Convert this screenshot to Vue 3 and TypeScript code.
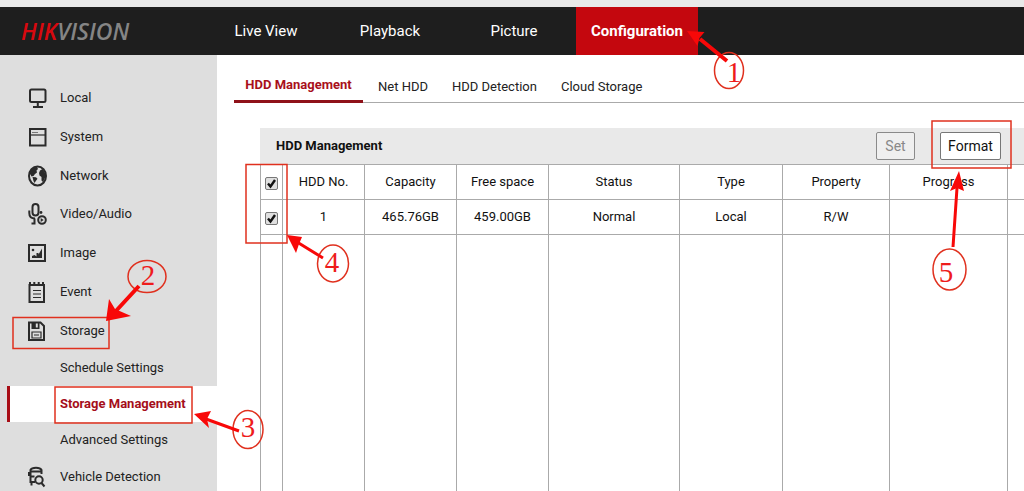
<script setup lang="ts">
import { ref } from 'vue'

interface MenuItem { icon: string; label: string }

const topNav = ['Live View', 'Playback', 'Picture', 'Configuration']
const menu: MenuItem[] = [
  { icon: 'local', label: 'Local' },
  { icon: 'system', label: 'System' },
  { icon: 'network', label: 'Network' },
  { icon: 'av', label: 'Video/Audio' },
  { icon: 'image', label: 'Image' },
  { icon: 'event', label: 'Event' },
  { icon: 'storage', label: 'Storage' },
]
const subMenu = ['Schedule Settings', 'Storage Management', 'Advanced Settings']
const tabs = ['HDD Management', 'Net HDD', 'HDD Detection', 'Cloud Storage']
const columns = ['HDD No.', 'Capacity', 'Free space', 'Status', 'Type', 'Property', 'Progress', '']
const disk = ['1', '465.76GB', '459.00GB', 'Normal', 'Local', 'R/W', '', '']
const allChecked = ref(true)
const diskChecked = ref(true)
</script>

<template>
  <div class="page">
    <div class="strip"></div>
    <header class="header">
      <a class="logo" href="#" aria-label="HIKVISION"><span class="hik">HIK</span><span>VISION</span></a>
      <nav class="top-nav">
        <a v-for="(n, i) in topNav" :key="n" href="#" :class="['top-link', 'top-' + i]">{{ n }}</a>
      </nav>
    </header>
    <div class="body">
      <aside class="sidebar">
        <nav>
          <div class="menu">
            <a v-for="m in menu" :key="m.icon" href="#" class="item">
              <svg class="icon" viewBox="0 0 20 22" aria-hidden="true">
                <g v-if="m.icon === 'local'" class="s">
                  <rect x="3" y="2.500" width="15.500" height="12.500" rx="1.500" />
                  <path d="M10.800 15v4.500M6 20h10" />
                </g>
                <g v-else-if="m.icon === 'system'">
                  <rect class="s" x="3" y="3" width="15.500" height="16.500" />
                  <path class="s thin" d="M3 9h15.500" />
                  <path class="t" d="M5 6.500h6" />
                </g>
                <g v-else-if="m.icon === 'network'">
                  <ellipse class="s" cx="10.500" cy="11" rx="8.500" ry="9.500" />
                  <path class="f" d="M2.500 8C3.500 4.500 6.500 2 10 2l1 2-1.500 1.500.5 2-2 1.500-1.500 2-2 .5zM5.500 12l3.500.3 1.500 1.500-1.500 2-1.500 2.200-1-2z" />
                  <path class="f" d="M13 5.500l2.500-1.500 2.500 4 .5 4-2.500 5-1.500-1.500V12l-2-1.500-.5-2.500z" />
                </g>
                <g v-else-if="m.icon === 'av'">
                  <rect class="s" x="5.500" y="1" width="6" height="11.500" rx="3" />
                  <path class="s" d="M2.300 7.500v2.500c0 3.500 2 5.500 5.700 5.500M7.500 15.500V20M4.500 20.500h4" />
                  <circle class="s" cx="15" cy="17" r="3.800" />
                  <path class="f" d="M13.700 15v4l3-2z" />
                  <circle class="f" cx="14" cy="9.500" r="1.400" />
                </g>
                <g v-else-if="m.icon === 'image'">
                  <rect class="s" x="2" y="3" width="16" height="16" />
                  <path class="f" d="M5 16v-2l2.500-1 2 1.500V11h2v1.500L15 6.500V16z" />
                  <circle class="f" cx="6" cy="8" r="1.300" />
                </g>
                <g v-else-if="m.icon === 'event'">
                  <rect class="s" x="2.500" y="4" width="14.500" height="17" />
                  <path class="s" d="M3 1v4M7.300 1v4M11.700 1v4M16 1v4" />
                  <path class="s thin" d="M6 9.500h8M6 13h8M6 16.500h8" />
                </g>
                <g v-else>
                  <path class="s" d="M2 2.500h11.500L17 6v14H2z" />
                  <path class="f" d="M4.500 3h8v6h-8z" />
                  <path class="l" d="M9.800 3.500v4" />
                  <path class="s thin" d="M5 12h9v6H5zM7 15h5" />
                </g>
              </svg>
              <span>{{ m.label }}</span>
            </a>
          </div>
          <a v-for="(s, i) in subMenu" :key="s" href="#" :class="['sub', { current: i === 1 }]">{{ s }}</a>
          <a href="#" class="item">
            <svg class="icon" viewBox="0 0 20 22" aria-hidden="true">
              <path class="s" d="M3.500 4C5 1 13 1 14.500 4v4M3.500 3.500V16h4.500M3.500 5.500h11M3.500 10.500h4M2 6v4M4.500 16v3.500" />
              <circle class="s" cx="12" cy="14" r="3.700" />
              <path class="s" d="M14.500 17l3 3.500" />
            </svg>
            <span>Vehicle Detection</span>
          </a>
        </nav>
      </aside>
      <main class="main">
        <nav class="tabs">
          <a v-for="(t, i) in tabs" :key="t" href="#" :class="['tab', { active: i === 0 }]">{{ t }}</a>
        </nav>
        <section class="panel">
          <div class="panel-head">
            <h2>HDD Management</h2>
            <button type="button" class="btn" disabled>Set</button>
            <button type="button" class="btn format">Format</button>
          </div>
          <div class="table-area">
            <table>
              <colgroup>
                <col class="c0"><col class="c1"><col class="c2"><col class="c2"><col class="c4"><col class="c5"><col class="c6"><col class="c7"><col>
              </colgroup>
              <thead>
                <tr>
                  <th>
                    <label class="check">
                      <input v-model="allChecked" type="checkbox" aria-label="Select all disks">
                      <svg v-if="allChecked" viewBox="0 0 13 13" aria-hidden="true"><path d="M3 6.500l2.500 3L10 3" /></svg>
                    </label>
                  </th>
                  <th v-for="(c, i) in columns" :key="i">{{ c }}</th>
                </tr>
              </thead>
              <tbody>
                <tr>
                  <td>
                    <label class="check">
                      <input v-model="diskChecked" type="checkbox" aria-label="Select disk 1">
                      <svg v-if="diskChecked" viewBox="0 0 13 13" aria-hidden="true"><path d="M3 6.500l2.500 3L10 3" /></svg>
                    </label>
                  </td>
                  <td v-for="(d, i) in disk" :key="i">{{ d }}</td>
                </tr>
                <tr class="rest"><td v-for="i in 9" :key="i"></td></tr>
              </tbody>
            </table>
          </div>
        </section>
      </main>
    </div>
    <svg class="notes" width="1024" height="491" viewBox="0 0 1024 491" aria-hidden="true">
      <g class="outline">
        <rect x="13" y="317.500" width="96" height="31" />
        <rect x="55" y="387" width="137" height="36" />
        <rect x="246" y="164.500" width="41" height="78.500" />
        <rect x="932" y="121" width="79" height="47" />
        <ellipse cx="729" cy="70.500" rx="14.500" ry="18" />
        <ellipse cx="147" cy="276.500" rx="19" ry="16" />
        <ellipse cx="248" cy="429.500" rx="15" ry="19" />
        <ellipse cx="333" cy="263.500" rx="15.500" ry="18.500" />
        <ellipse cx="949.500" cy="269.500" rx="16.500" ry="20.500" />
      </g>
      <path class="arrow wide" d="M727 61L700 39M139 286L115 312" />
      <path class="arrow" d="M239 431L206 419M323 258L297 242M953 247L957 188" />
      <path class="head" d="M687 31l17.500 1-5 6-2 8zM106 321l3-22 6 10 16 7zM194 414l17-3-4 8 2 9zM287 235l15 2-3 7-3 9zM959 171l5 20-7-3-7 3z" />
      <g class="num">
        <text x="734" y="82">1</text>
        <text x="148" y="285">2</text>
        <text x="248" y="437">3</text>
        <text x="332" y="272">4</text>
        <text x="946" y="282">5</text>
      </g>
    </svg>
  </div>
</template>

<style>
html, body, #app { height: 100%; margin: 0; }
</style>
<style scoped>
.page { position: relative; display: flex; flex-direction: column; height: 100%; overflow: hidden; background: #fff; color: #222; font: 13px/20px Roboto, "Liberation Sans", Arial, sans-serif; }
a { color: inherit; text-decoration: none; }
.strip { flex: none; height: 7px; background: #e9e9e9; }
.header { flex: none; display: flex; height: 48px; background: #1e1e1e; color: #fff; }
.logo { box-sizing: border-box; width: 217px; padding-left: 21px; color: #858585; font: italic 600 23px/48px "Open Sans", sans-serif; }
.hik { color: #d8090f; }
.top-nav { display: flex; font-size: 15px; line-height: 49px; }
.top-link { box-sizing: border-box; width: 124px; text-align: center; }
.top-0 { width: 98px; }
.top-1 { width: 150px; }
.top-2 { width: 111px; padding-right: 13px; }
.top-3 { width: 122px; background: #c4070e; font-weight: bold; }
.body { display: flex; flex: 1; min-height: 0; }
.sidebar { flex: none; box-sizing: border-box; width: 217px; padding-top: 24px; background: #dedede; }
.menu { display: grid; grid-auto-rows: 1fr; min-height: 271px; }
.item { display: flex; align-items: center; gap: 13px; height: 38px; padding-left: 27px; }
.menu .item { height: auto; }
.icon { flex: none; width: 20px; height: 22px; }
.s { fill: none; stroke: #2b2b2b; stroke-width: 2; }
.thin { stroke-width: 1.2; }
.t { stroke: #777; stroke-width: 1; }
.l { stroke: #dedede; stroke-width: 2; }
.f { fill: #2b2b2b; }
.sub { display: block; padding-left: 60px; line-height: 36px; }
.current { margin-left: 7px; padding-left: 50px; border-left: 3px solid #a80d16; background: #fff; color: #a50e1a; font-weight: bold; }
.main { flex: 1; min-width: 0; display: flex; flex-direction: column; padding-left: 17px; }
.tabs { flex: none; display: flex; height: 47px; border-bottom: 1px solid #aaa; line-height: 64px; }
.tab { margin-right: 24px; }
.active { box-sizing: border-box; width: 129px; height: 48px; margin-right: 15px; border-bottom: 3px solid #8f1119; color: #a8101b; font-weight: bold; line-height: 59px; text-align: center; }
.panel { flex: 1; min-height: 0; display: flex; flex-direction: column; margin: 25px 0 0 26px; }
.panel-head { flex: none; display: flex; align-items: center; height: 36px; padding: 0 23px 0 16px; background: #e9e9e9; }
h2 { flex: 1; margin: 0; color: #111; font-size: 13px; }
.btn { box-sizing: border-box; width: 39px; height: 28px; padding: 0; border: 1px solid #777; border-radius: 2px; background: #fff; color: #111; font: inherit; }
.btn:disabled { border-color: #8a8a8a; background: #efefef; color: #888; }
.format { width: 61px; margin-left: 25px; }
.table-area { flex: 1; min-height: 0; margin-bottom: -2px; }
table { width: 100%; height: 100%; border-collapse: collapse; table-layout: fixed; color: #111; }
.c0 { width: 22px; }
.c1 { width: 82px; }
.c2 { width: 92px; }
.c4 { width: 131px; }
.c5 { width: 103px; }
.c6 { width: 107px; }
.c7 { width: 118px; }
th, td { height: 34px; padding: 0; border: 1px solid #aaa; font-weight: normal; text-align: center; }
.rest td { height: auto; }
th:last-child, td:last-child { border-right: 0; }
.check { display: grid; width: 13px; margin: 3px auto 0; }
.check input, .check svg { grid-area: 1 / 1; width: 13px; height: 13px; }
.check input { box-sizing: border-box; appearance: none; margin: 0; border: 1px solid #777; border-radius: 2px; background: #e0e0e0; }
.check path { fill: none; stroke: #111; stroke-width: 2.4; }
.check svg { pointer-events: none; }
.btn { font-size: 14px; }
.notes { position: absolute; top: 0; left: 0; pointer-events: none; }
.outline { fill: none; stroke: #e0301e; stroke-width: 1.5; }
.arrow { fill: none; stroke: #f80808; stroke-width: 3; }
.wide { stroke-width: 4; }
.head { fill: #f80808; }
.num { fill: #ee1c1c; font: 29px "Liberation Serif", serif; text-anchor: middle; }
</style>
